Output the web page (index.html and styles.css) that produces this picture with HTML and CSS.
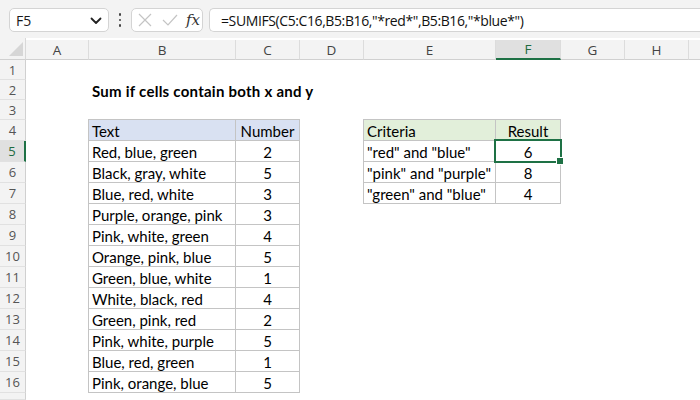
FILE: index.html
```html
<!DOCTYPE html>
<html>
<head>
<meta charset="utf-8">
<link rel="stylesheet" href="styles.css">
</head>
<body>
<div class="app">
  <div class="toolbar">
    <div class="namebox">
      <span class="name">F5</span>
      <svg class="chev" width="12" height="8" viewBox="0 0 12 8"><path d="M1.5 1.5 L6 6 L10.5 1.5" fill="none" stroke="#222" stroke-width="1.8" stroke-linecap="round" stroke-linejoin="round"/></svg>
    </div>
    <div class="dots"><span></span><span></span><span></span></div>
    <div class="fxbox">
      <svg width="14" height="14" viewBox="0 0 14 14"><path d="M1 1 L13 13 M13 1 L1 13" stroke="#c4c4c4" stroke-width="1.2" fill="none"/></svg>
      <svg width="16" height="12" viewBox="0 0 16 12"><path d="M1 6 L6 11 L15 1" stroke="#c4c4c4" stroke-width="1.2" fill="none"/></svg>
      <span class="fx">fx</span>
    </div>
    <div class="formula">=SUMIFS(C5:C16,B5:B16,"*red*",B5:B16,"*blue*")</div>
  </div>
  <div class="sheet">
    <div class="corner"><svg width="14" height="14" viewBox="0 0 14 14"><path d="M14 0 L14 14 L0 14 Z" fill="#d6d6d6"/></svg></div>
    <div class="ch">A</div>
    <div class="ch">B</div>
    <div class="ch">C</div>
    <div class="ch">D</div>
    <div class="ch">E</div>
    <div class="ch active">F</div>
    <div class="ch">G</div>
    <div class="ch">H</div>
    <div class="ch last"></div>

    <div class="rh r1">1</div>
    <div class="rh r2">2</div>
    <div class="rh r3">3</div>
    <div class="rh r4">4</div>
    <div class="rh r5 active">5</div>
    <div class="rh r6">6</div>
    <div class="rh r7">7</div>
    <div class="rh r8">8</div>
    <div class="rh r9">9</div>
    <div class="rh r10">10</div>
    <div class="rh r11">11</div>
    <div class="rh r12">12</div>
    <div class="rh r13">13</div>
    <div class="rh r14">14</div>
    <div class="rh r15">15</div>
    <div class="rh r16">16</div>
    <div class="rh r17"></div>

    <div class="title">Sum if cells contain both x and y</div>

    <div class="t1 hd b top lft r4">Text</div>
    <div class="t1 hd c top ctr r4">Number</div>

    <div class="t1 b lft r5">Red, blue, green</div><div class="t1 c ctr r5">2</div>
    <div class="t1 b lft r6">Black, gray, white</div><div class="t1 c ctr r6">5</div>
    <div class="t1 b lft r7">Blue, red, white</div><div class="t1 c ctr r7">3</div>
    <div class="t1 b lft r8">Purple, orange, pink</div><div class="t1 c ctr r8">3</div>
    <div class="t1 b lft r9">Pink, white, green</div><div class="t1 c ctr r9">4</div>
    <div class="t1 b lft r10">Orange, pink, blue</div><div class="t1 c ctr r10">5</div>
    <div class="t1 b lft r11">Green, blue, white</div><div class="t1 c ctr r11">1</div>
    <div class="t1 b lft r12">White, black, red</div><div class="t1 c ctr r12">4</div>
    <div class="t1 b lft r13">Green, pink, red</div><div class="t1 c ctr r13">2</div>
    <div class="t1 b lft r14">Pink, white, purple</div><div class="t1 c ctr r14">5</div>
    <div class="t1 b lft r15">Blue, red, green</div><div class="t1 c ctr r15">1</div>
    <div class="t1 b lft r16">Pink, orange, blue</div><div class="t1 c ctr r16">5</div>

    <div class="t2 hd e top lft r4">Criteria</div>
    <div class="t2 hd f top ctr r4">Result</div>
    <div class="t2 e lft r5">"red" and "blue"</div><div class="t2 f ctr r5">6</div>
    <div class="t2 e lft r6">"pink" and "purple"</div><div class="t2 f ctr r6">8</div>
    <div class="t2 e lft r7">"green" and "blue"</div><div class="t2 f ctr r7">4</div>

    <div class="sel"><span class="handle"></span></div>
  </div>
</div>
</body>
</html>
```
FILE: styles.css
```css
html, body {
  margin: 0;
  padding: 0;
  background: #ffffff;
}
.app {
  width: 700px;
  height: 400px;
  overflow: hidden;
  background: #f3f3f3;
  font-family: "Open Sans", "Noto Sans", sans-serif;
}
.toolbar {
  height: 38px;
  display: flex;
  align-items: flex-start;
  padding-top: 8px;
  box-sizing: border-box;
}
.namebox {
  margin-left: 9px;
  width: 100px;
  height: 24px;
  box-sizing: border-box;
  background: #fff;
  border: 1px solid #d4d4d4;
  border-radius: 5px;
  display: flex;
  align-items: center;
  justify-content: space-between;
  padding: 0 6px 0 6px;
}
.name {
  font-size: 14px;
  color: #1a1a1a;
}
.chev { margin-top: 1px; }
.dots {
  width: 22px;
  height: 24px;
  display: flex;
  flex-direction: column;
  align-items: center;
  justify-content: center;
  gap: 3px;
}
.dots span {
  width: 2.5px;
  height: 2.5px;
  border-radius: 50%;
  background: #444;
}
.fxbox {
  width: 72px;
  height: 24px;
  box-sizing: border-box;
  background: #fff;
  border: 1px solid #d4d4d4;
  border-radius: 5px;
  display: flex;
  align-items: center;
  padding: 0 0 0 6px;
  gap: 10px;
}
.fx {
  font-family: "DejaVu Serif", "Liberation Serif", serif;
  font-style: italic;
  font-size: 15px;
  color: #333;
  margin-left: -2px;
}
.formula {
  margin-left: 6px;
  flex: 1;
  height: 24px;
  box-sizing: border-box;
  background: #fff;
  border: 1px solid #d4d4d4;
  border-right: none;
  border-radius: 5px 0 0 5px;
  display: flex;
  align-items: center;
  padding-left: 11px;
  font-size: 14px;
  letter-spacing: -0.4px;
  color: #111;
  white-space: nowrap;
}
.sheet {
  display: grid;
  grid-template-columns: 26px 63px 147px 64px 64px 132px 65px 64px 64px 11px;
  grid-template-rows: 22px 20px 20px 20px repeat(13, 21px) 7px;
  background: #fff;
  font-family: "Lato", "Liberation Sans", sans-serif;
  font-size: 15px;
  color: #000;
}
.corner {
  background: #f3f3f3;
  border-right: 1px solid #d8d8d8;
  border-bottom: 1px solid #d0d0d0;
  display: flex;
  align-items: flex-end;
  justify-content: flex-end;
  padding: 0 2px 3px 0;
}
.ch {
  background: #f3f3f3;
  border-right: 1px solid #dcdcdc;
  border-bottom: 1px solid #d0d0d0;
  display: flex;
  align-items: center;
  justify-content: center;
  font-family: "Open Sans", "Noto Sans", sans-serif;
  font-size: 13.5px;
  color: #444;
  margin-top: 2px;
  padding-top: 0;
}
.ch.last { border-right: none; }
.ch.active {
  background: #e0e0e0;
  color: #1e6b40;
  border-bottom: 2px solid #1e7145;
}
.rh {
  grid-column: 1;
  background: #f3f3f3;
  border-right: 1px solid #d0d0d0;
  border-bottom: 1px solid #e1e1e1;
  display: flex;
  align-items: center;
  justify-content: center;
  font-family: "Open Sans", "Noto Sans", sans-serif;
  font-size: 13px;
  color: #555;
}
.rh.active {
  background: #e0e0e0;
  color: #1e6b40;
  border-right: 2px solid #1e7145;
}
.r1 { grid-row: 2; }
.r2 { grid-row: 3; }
.r3 { grid-row: 4; }
.r4 { grid-row: 5; }
.r5 { grid-row: 6; }
.r6 { grid-row: 7; }
.r7 { grid-row: 8; }
.r8 { grid-row: 9; }
.r9 { grid-row: 10; }
.r10 { grid-row: 11; }
.r11 { grid-row: 12; }
.r12 { grid-row: 13; }
.r13 { grid-row: 14; }
.r14 { grid-row: 15; }
.r15 { grid-row: 16; }
.r16 { grid-row: 17; }
.r17 { grid-row: 18; }
.title {
  grid-row: 3;
  grid-column: 3 / 6;
  font-weight: bold;
  display: flex;
  align-items: center;
  padding-left: 3px;
  padding-top: 1px;
  letter-spacing: 0.25px;
  white-space: nowrap;
}
.t1, .t2 {
  border-right: 1px solid #c4c4c4;
  border-bottom: 1px solid #c4c4c4;
  display: flex;
  align-items: center;
  white-space: nowrap;
  padding-top: 1px;
}
.top { border-top: 1px solid #c4c4c4; margin-top: -1px; }
.b { grid-column: 3; border-left: 1px solid #c4c4c4; margin-left: -1px; }
.c { grid-column: 4; }
.e { grid-column: 6; border-left: 1px solid #c4c4c4; margin-left: -1px; }
.f { grid-column: 7; }
.lft { padding-left: 3px; }
.ctr { justify-content: center; }
.t1.hd { background: #d9e1f2; }
.t2.hd { background: #e2efda; }
.sel {
  grid-row: 6;
  grid-column: 7;
  margin: -2px -1px -1px -2px;
  border: 2px solid #1e7145;
  position: relative;
  z-index: 2;
}
.handle {
  position: absolute;
  right: -4px;
  bottom: -4px;
  width: 6px;
  height: 6px;
  background: #1e7145;
  border: 1px solid #fff;
}
```
